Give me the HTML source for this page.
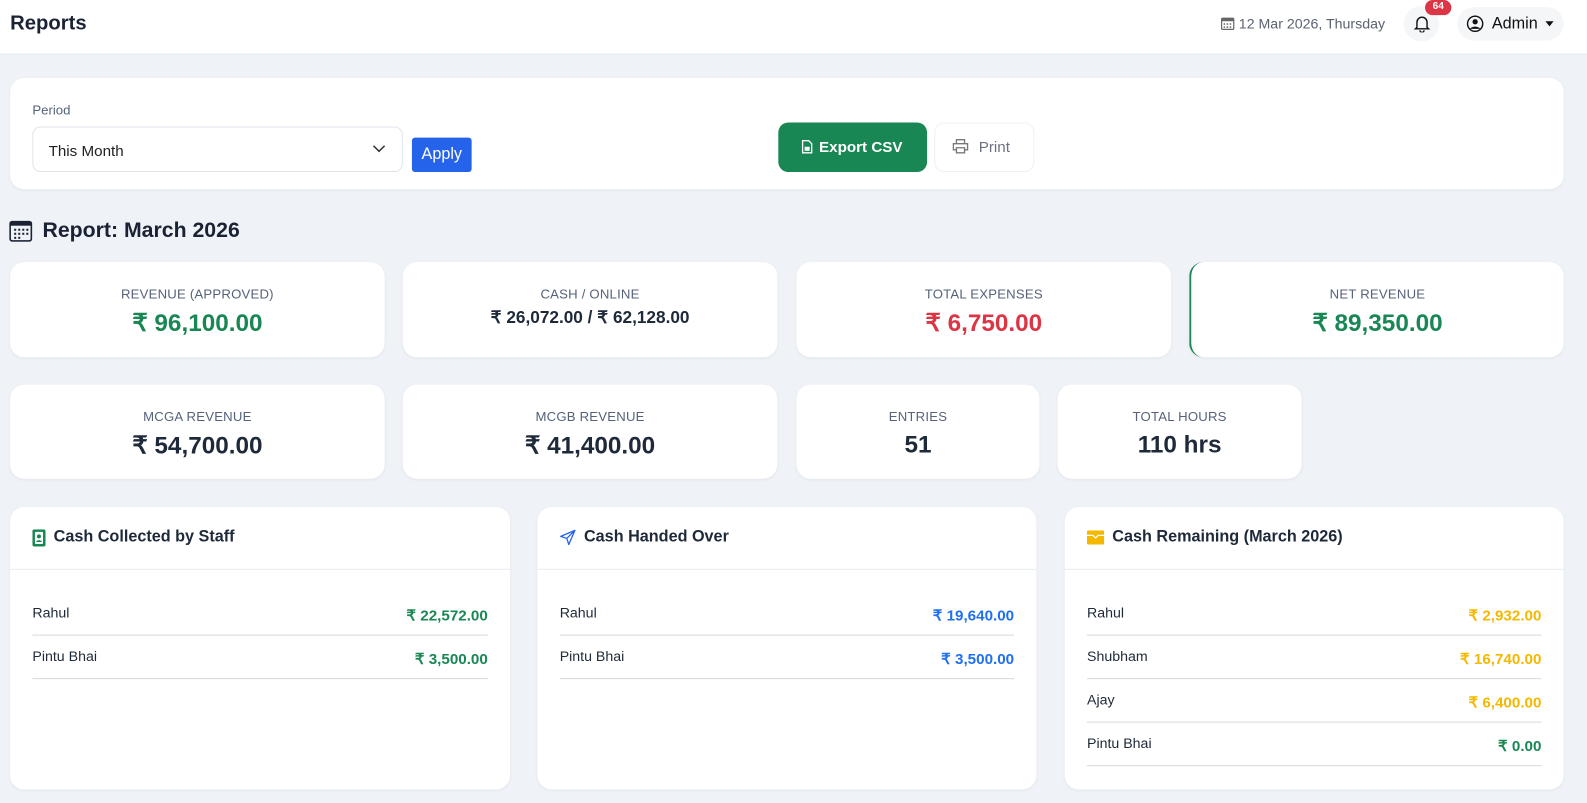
<!DOCTYPE html>
<html><head><meta charset="utf-8"><style>
*{box-sizing:border-box;margin:0;padding:0}
html,body{width:1587px;height:803px;overflow:hidden;background:#eff2f7}
#w{position:absolute;left:0;top:0;width:1568px;height:793px;transform:scale(1.0121);transform-origin:0 0;font-family:"Liberation Sans",sans-serif;color:#1e2939}
.hdr{position:absolute;left:0;top:0;width:1568px;height:54px;background:#fff;border-bottom:1px solid #e3e7ee}
.abs{position:absolute}
.card{position:absolute;background:#fff;border-radius:14px;box-shadow:0 1px 3px rgba(0,0,0,.05)}
.stat{text-align:center}
.stat .l{position:absolute;left:0;right:0;top:24px;font-size:13px;color:#55627a;letter-spacing:.2px}
.stat .v{position:absolute;left:0;right:0;top:46px;font-size:24px;font-weight:bold}
.bc .t{position:absolute;left:22px;top:21px;font-size:16px;font-weight:bold;display:flex;align-items:center;gap:8px}
.bc .sep{position:absolute;left:0;right:0;top:61px;border-top:1px solid #e8ebf0}
.row{position:absolute;left:22px;right:22px;height:43px;border-bottom:1px solid #d6d9de;font-size:14px}
.row span{position:absolute;left:0;top:12px}
.row b{position:absolute;right:0;top:14px;font-size:15px}
.g{color:#198754}.b{color:#1f6ff0}.y{color:#f5b800}.r{color:#dc3545}
</style></head><body><div id="w">
<div class="hdr">
<div class="abs" style="left:10px;top:12px;font-size:20px;font-weight:bold;color:#1a2233">Reports</div>
<div class="abs" style="left:1206px;top:15px;font-size:14px;color:#5a6270;display:flex;align-items:center;gap:4px">
<svg width="14" height="14" viewBox="0 0 14 14"><rect x="1" y="2" width="12" height="11" rx="1" fill="none" stroke="#666" stroke-width="1.2"/><rect x="1" y="2" width="12" height="3" fill="#666"/><g fill="#666"><rect x="3" y="7" width="1.5" height="1.5"/><rect x="6" y="7" width="1.5" height="1.5"/><rect x="9" y="7" width="1.5" height="1.5"/><rect x="3" y="10" width="1.5" height="1.5"/><rect x="6" y="10" width="1.5" height="1.5"/><rect x="9" y="10" width="1.5" height="1.5"/></g></svg>12 Mar 2026, Thursday</div>
<div class="abs" style="left:1387px;top:6px;width:35px;height:35px;border-radius:50%;background:#f5f6f8"></div>
<svg class="abs" style="left:1397px;top:15px" width="16" height="17" viewBox="0 0 16 17"><path d="M3 12V7a5 5 0 0 1 10 0v5l1.5 1.5h-13z" fill="none" stroke="#111" stroke-width="1.4"/><path d="M6 15a2 2 0 0 0 4 0" fill="none" stroke="#111" stroke-width="1.4"/></svg>
<div class="abs" style="left:1408px;top:0;width:26px;height:15px;border-radius:8px;background:#dc3545;color:#fff;font-size:10px;font-weight:bold;text-align:center;line-height:14px">64</div>
<div class="abs" style="left:1440px;top:7px;width:105px;height:33px;border-radius:17px;background:#f5f6f8"></div>
<svg class="abs" style="left:1449px;top:15px" width="17" height="17" viewBox="0 0 17 17"><circle cx="8.5" cy="8.5" r="7.5" fill="none" stroke="#111" stroke-width="1.4"/><circle cx="8.5" cy="6.5" r="2.6" fill="#111"/><path d="M3.5 13.5c1.5-3 8.5-3 10 0" fill="#111"/></svg>
<div class="abs" style="left:1474px;top:15px;font-size:16px;color:#111">Admin</div>
<div class="abs" style="left:1527px;top:21px;border:4px solid transparent;border-top:5px solid #111"></div>
</div>

<div class="card" style="left:10px;top:77px;width:1535px;height:110px">
<div class="abs" style="left:22px;top:24px;font-size:13px;color:#55627a">Period</div>
<div class="abs" style="left:22px;top:48px;width:366px;height:45px;border:1px solid #dfe3ea;border-radius:8px;font-size:15px;padding:15px 0 0 15px;color:#222">This Month</div>
<svg class="abs" style="left:358px;top:66px" width="13" height="8" viewBox="0 0 13 8"><path d="M1 1l5.5 5.5L12 1" fill="none" stroke="#333" stroke-width="1.5"/></svg>
<div class="abs" style="left:397px;top:59px;width:59px;height:34px;background:#2563eb;border-radius:3px;color:#fff;font-size:16px;text-align:center;line-height:34px">Apply</div>
<div class="abs" style="left:759px;top:44px;width:147px;height:49px;background:#198754;border-radius:10px;color:#fff;font-size:15px;font-weight:bold;line-height:49px;text-align:center;padding-left:16px">Export CSV</div>
<svg class="abs" style="left:782px;top:61px" width="11" height="14" viewBox="0 0 11 14"><path d="M1 1h6l3 3v9H1z" fill="none" stroke="#fff" stroke-width="1.3"/><rect x="3" y="7" width="5" height="4" fill="#fff"/></svg>
<div class="abs" style="left:913px;top:44px;width:99px;height:49px;background:#fff;border:1px solid #f0f1f4;border-radius:10px;color:#6b7280;font-size:15px;line-height:48px;padding-left:43px">Print</div>
<svg class="abs" style="left:931px;top:60px" width="16" height="15" viewBox="0 0 16 15"><path d="M4 5V1h8v4M4 11H1V5h14v6h-3M4 9h8v5H4z" fill="none" stroke="#777" stroke-width="1.3"/></svg>
</div>

<svg class="abs" style="left:9px;top:217px" width="23" height="22" viewBox="0 0 23 22"><rect x="1" y="2" width="21" height="19" rx="2" fill="none" stroke="#1a2233" stroke-width="1.6"/><rect x="1" y="2" width="21" height="4" fill="#1a2233"/><g fill="#1a2233"><rect x="5" y="9" width="2" height="2"/><rect x="9" y="9" width="2" height="2"/><rect x="13" y="9" width="2" height="2"/><rect x="17" y="9" width="2" height="2"/><rect x="5" y="13" width="2" height="2"/><rect x="9" y="13" width="2" height="2"/><rect x="13" y="13" width="2" height="2"/><rect x="17" y="13" width="2" height="2"/><rect x="5" y="17" width="2" height="2"/><rect x="9" y="17" width="2" height="2"/></g></svg>
<div class="abs" style="left:42px;top:216px;font-size:21px;font-weight:bold;color:#1a2233">Report: March 2026</div>

<div class="card stat" style="left:10px;top:259px;width:370px;height:94px"><div class="l">REVENUE (APPROVED)</div><div class="v g">₹ 96,100.00</div></div>
<div class="card stat" style="left:398px;top:259px;width:370px;height:94px"><div class="l">CASH / ONLINE</div><div class="v" style="font-size:17px;top:45px">₹ 26,072.00 / ₹ 62,128.00</div></div>
<div class="card stat" style="left:787px;top:259px;width:370px;height:94px"><div class="l">TOTAL EXPENSES</div><div class="v r">₹ 6,750.00</div></div>
<div class="card stat" style="left:1175px;top:259px;width:370px;height:94px;border-left:2px solid #198754"><div class="l">NET REVENUE</div><div class="v g">₹ 89,350.00</div></div>

<div class="card stat" style="left:10px;top:380px;width:370px;height:93px"><div class="l">MCGA REVENUE</div><div class="v">₹ 54,700.00</div></div>
<div class="card stat" style="left:398px;top:380px;width:370px;height:93px"><div class="l">MCGB REVENUE</div><div class="v">₹ 41,400.00</div></div>
<div class="card stat" style="left:787px;top:380px;width:240px;height:93px"><div class="l">ENTRIES</div><div class="v">51</div></div>
<div class="card stat" style="left:1045px;top:380px;width:241px;height:93px"><div class="l">TOTAL HOURS</div><div class="v">110 hrs</div></div>

<div class="card bc" style="left:10px;top:501px;width:494px;height:279px">
<div class="t"><svg width="13" height="17" viewBox="0 0 13 17"><rect x="0" y="0" width="13" height="17" rx="2" fill="#198754"/><rect x="2.5" y="2.5" width="8" height="12" rx="1" fill="#fff"/><circle cx="6.5" cy="7" r="2" fill="#198754"/><path d="M3.5 12.5c1-2.5 5-2.5 6 0z" fill="#198754"/></svg>Cash Collected by Staff</div><div class="sep"></div>
<div class="row" style="top:84px"><span>Rahul</span><b class="g">₹ 22,572.00</b></div>
<div class="row" style="top:127px"><span>Pintu Bhai</span><b class="g">₹ 3,500.00</b></div>
</div>
<div class="card bc" style="left:531px;top:501px;width:493px;height:279px">
<div class="t"><svg width="16" height="16" viewBox="0 0 16 16"><path d="M15 1L1 7l6 2 2 6z M15 1L7 9" fill="none" stroke="#2563eb" stroke-width="1.3" stroke-linejoin="round"/></svg>Cash Handed Over</div><div class="sep"></div>
<div class="row" style="top:84px"><span>Rahul</span><b class="b">₹ 19,640.00</b></div>
<div class="row" style="top:127px"><span>Pintu Bhai</span><b class="b">₹ 3,500.00</b></div>
</div>
<div class="card bc" style="left:1052px;top:501px;width:493px;height:279px">
<div class="t"><svg width="17" height="14" viewBox="0 0 17 14"><rect x="0" y="0" width="17" height="14" rx="1.5" fill="#f5b800"/><path d="M0 5h6l2.5 2.5L11 5h6" fill="none" stroke="#fff" stroke-width="1.3"/></svg>Cash Remaining (March 2026)</div><div class="sep"></div>
<div class="row" style="top:84px"><span>Rahul</span><b class="y">₹ 2,932.00</b></div>
<div class="row" style="top:127px"><span>Shubham</span><b class="y">₹ 16,740.00</b></div>
<div class="row" style="top:170px"><span>Ajay</span><b class="y">₹ 6,400.00</b></div>
<div class="row" style="top:213px"><span>Pintu Bhai</span><b class="g">₹ 0.00</b></div>
</div>
</div></body></html>
